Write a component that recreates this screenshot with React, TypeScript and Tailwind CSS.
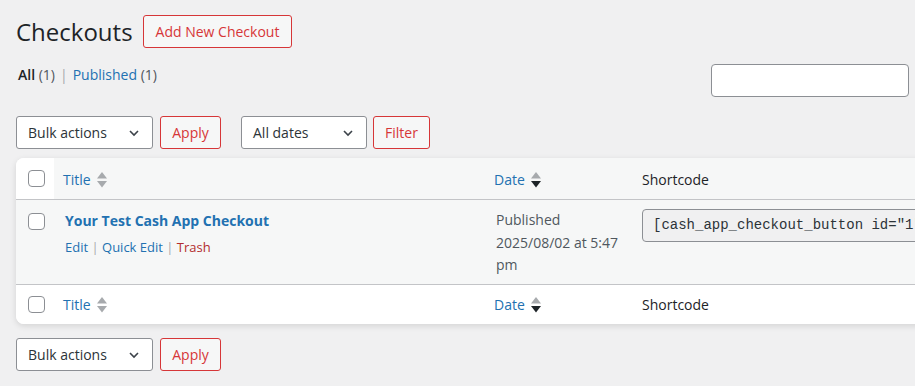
import React from 'react';

const SortArrows: React.FC<{ active?: boolean }> = ({ active }) => (
  <svg width="10" height="18" viewBox="0 0 10 18" className="ml-[6px] shrink-0">
    <polygon points="5,1 10,7.5 0,7.5" fill="#a7aaad" />
    <polygon points="0,10 10,10 5,16.5" fill={active ? '#1d2327' : '#a7aaad'} />
  </svg>
);

const Chevron = () => (
  <svg width="16" height="16" viewBox="0 0 20 20" className="shrink-0">
    <path d="M5 7.5l5 5 5-5" fill="none" stroke="#3c434a" strokeWidth="2" />
  </svg>
);

const Checkbox = () => (
  <span className="block w-[17px] h-[17px] rounded-[4px] border border-[#8c8f94] bg-white" />
);

const Select: React.FC<{ label: string; width: string }> = ({ label, width }) => (
  <div className={`${width} h-[33px] flex items-center justify-between pl-[11px] pr-[10px] bg-white border border-[#8c8f94] rounded-[3px] text-[14px] text-[#2c3338]`}>
    <span>{label}</span>
    <Chevron />
  </div>
);

const Button: React.FC<{ label: string; className?: string }> = ({ label, className = '' }) => (
  <button className={`h-[33px] px-[10px] border border-[#d63638] rounded-[3px] bg-[#f6f7f7] text-[14px] text-[#d63638] ${className}`}>
    {label}
  </button>
);

const HeadRow: React.FC<{ footer?: boolean }> = ({ footer }) => {
  const pad = footer ? 'pt-0' : 'pt-[2px]';
  return (
    <div className={`flex items-center ${footer ? 'h-[39px] bg-white' : 'h-[42px] bg-[#f6f7f7] border-b border-[#c3c4c7]'}`}>
      <div className={`w-[38px] self-stretch flex items-center pl-[12px] ${footer ? '' : 'bg-white'}`}>
        <Checkbox />
      </div>
      <div className={`w-[430px] flex items-center pl-[9px] ${pad} text-[14px] text-[#2271b1]`}>
        Title <SortArrows />
      </div>
      <div className={`w-[148px] flex items-center pl-[10px] ${pad} text-[14px] text-[#2271b1]`}>
        Date <SortArrows active />
      </div>
      <div className={`flex-1 pl-[10px] ${pad} text-[14px] text-[#1d2327]`}>Shortcode</div>
    </div>
  );
};

export default function App() {
  return (
    <div className="w-[915px] h-[386px] overflow-hidden bg-[#f0f0f1] font-['Open_Sans','Noto_Sans',sans-serif] text-[#3c434a]">
      <div className="w-[1200px] pl-4">
        <div className="flex items-center gap-[10px] pt-[15px]">
          <h1 className="text-[24px] leading-[1.3] text-[#1d2327]">Checkouts</h1>
          <Button label="Add New Checkout" className="px-[12px]" />
        </div>

        <div className="w-[893px] flex items-start justify-between mt-[16px]">
          <div className="pt-[1px] pl-[2px] leading-[20px] text-[14px]">
            <span className="font-semibold text-[#1d2327]">All</span>{' '}
            <span className="text-[#50575e]">(1)</span>
            <span className="text-[#a7aaad] mx-[5px]">|</span>
            <span className="text-[#2271b1]">Published</span>{' '}
            <span className="text-[#50575e]">(1)</span>
          </div>
          <div className="w-[198px] h-[33px] bg-white border border-[#8c8f94] rounded-[4px]" />
        </div>

        <div className="flex items-center mt-[19px]">
          <Select label="Bulk actions" width="w-[137px]" />
          <Button label="Apply" className="ml-[7px] w-[61px]" />
          <Select label="All dates" width="w-[126px] ml-[20px]" />
          <Button label="Filter" className="ml-[6px] w-[57px]" />
        </div>

        <div className="mt-[9px] w-[1120px] rounded-[8px] overflow-hidden bg-white shadow-[0_2px_6px_rgba(0,0,0,0.12)]">
          <HeadRow />
          <div className="flex h-[85px] bg-[#f6f7f7] border-b border-[#c3c4c7]">
            <div className="w-[38px] pl-[12px] pt-[13px]">
              <Checkbox />
            </div>
            <div className="w-[430px] pl-[11px] pt-[11px]">
              <div className="text-[14px] leading-[20px] font-bold text-[#2271b1]">Your Test Cash App Checkout</div>
              <div className="mt-[6px] text-[13px] leading-[20px] text-[#2271b1]">
                Edit <span className="text-[#a7aaad]">|</span> Quick Edit <span className="text-[#a7aaad]">|</span>{' '}
                <span className="text-[#b32d2e]">Trash</span>
              </div>
            </div>
            <div className="w-[148px] pl-[12px] pt-[9px] text-[14px] leading-[22.5px] text-[#50575e]">
              Published
              <br />
              2025/08/02 at 5:47 pm
            </div>
            <div className="flex-1 pl-[10px] pt-[9px]">
              <div className="h-[33px] w-[480px] flex items-center pl-[10px] bg-[#f0f0f1] border border-[#8c8f94] rounded-[4px] font-['Liberation_Mono',monospace] text-[14px] text-[#2c3338] whitespace-nowrap overflow-hidden">
                [cash_app_checkout_button id="1"]
              </div>
            </div>
          </div>
          <HeadRow footer />
        </div>

        <div className="flex items-center mt-[14px]">
          <Select label="Bulk actions" width="w-[137px]" />
          <Button label="Apply" className="ml-[7px] w-[61px]" />
        </div>
      </div>
    </div>
  );
}
